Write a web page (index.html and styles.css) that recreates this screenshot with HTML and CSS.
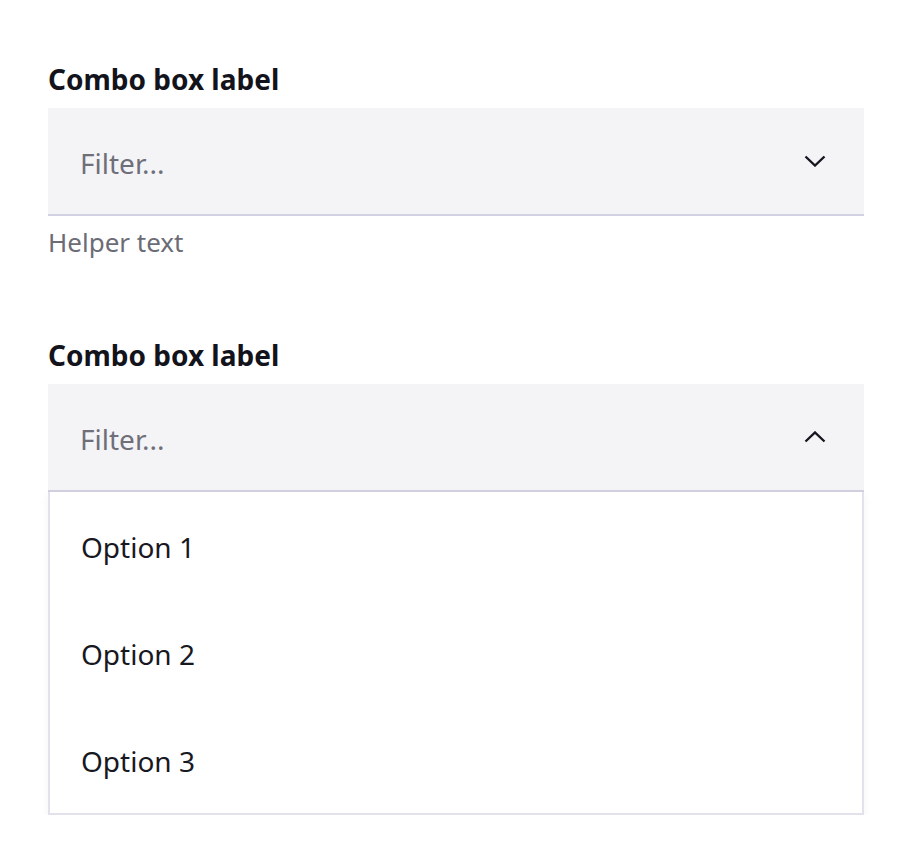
FILE: index.html
```html
<!DOCTYPE html>
<html lang="en">
<head>
  <meta charset="UTF-8" />
  <meta name="viewport" content="width=device-width, initial-scale=1.0"/>
  <title>Combo box</title>
  <link rel="stylesheet" href="styles.css">
</head>
<body>
  <div class="page">
    <!-- Closed combo box -->
    <div class="combo">
      <label class="combo-label" for="combo1">Combo box label</label>
      <div class="combo-field">
        <input id="combo1" class="combo-input" type="text" placeholder="Filter...">
        <svg class="chevron" width="22" height="12" viewBox="0 0 22 12">
          <polyline points="1.5 1.5, 11 10.5, 20.5 1.5" />
        </svg>
      </div>
      <div class="helper">Helper text</div>
    </div>

    <!-- Open combo box -->
    <div class="combo">
      <label class="combo-label" for="combo2">Combo box label</label>
      <div class="combo-field">
        <input id="combo2" class="combo-input" type="text" placeholder="Filter...">
        <svg class="chevron" width="22" height="12" viewBox="0 0 22 12">
          <polyline points="1.5 10.5, 11 1.5, 20.5 10.5" />
        </svg>
      </div>
      <ul class="menu">
        <li class="option">Option 1</li>
        <li class="option">Option 2</li>
        <li class="option">Option 3</li>
      </ul>
    </div>
  </div>
</body>
</html>
```

FILE: styles.css
```css
body {
  margin: 0;
  background: #ffffff;
  font-family: "Noto Sans", sans-serif;
  color: #161620;
}

.page {
  padding: 61px 48px 0 48px;
}

.combo + .combo {
  margin-top: 79px;
}

.combo-label {
  display: block;
  font-size: 28px;
  line-height: 36px;
  font-weight: 700;
  margin-bottom: 11px;
  color: #13131c;
}

.combo-field {
  display: flex;
  align-items: center;
  height: 106px;
  background: #f4f4f6;
  border-bottom: 2px solid #d2d1e2;
  padding: 0 38px 0 32px;
}

.combo-input {
  flex: 1;
  border: none;
  outline: none;
  background: transparent;
  font-family: inherit;
  font-size: 28px;
  color: #161620;
  padding: 3px 0 0 0;
}

.combo-input::placeholder {
  color: #6f6f7a;
}

.chevron {
  display: block;
}

.chevron polyline {
  fill: none;
  stroke: #161620;
  stroke-width: 2.4;
}

.helper {
  margin-top: 10px;
  font-size: 26px;
  line-height: 32px;
  color: #6c6c76;
}

.menu {
  list-style: none;
  margin: 0;
  padding: 0;
  background: #ffffff;
  border: 2px solid #e3e2ec;
  border-top: none;
  box-shadow: 0 3px 8px rgba(0, 0, 0, 0.05);
}

.option {
  height: 107px;
  box-sizing: border-box;
  padding: 3px 0 0 31px;
  display: flex;
  align-items: center;
  font-size: 28px;
  color: #181822;
}
```
